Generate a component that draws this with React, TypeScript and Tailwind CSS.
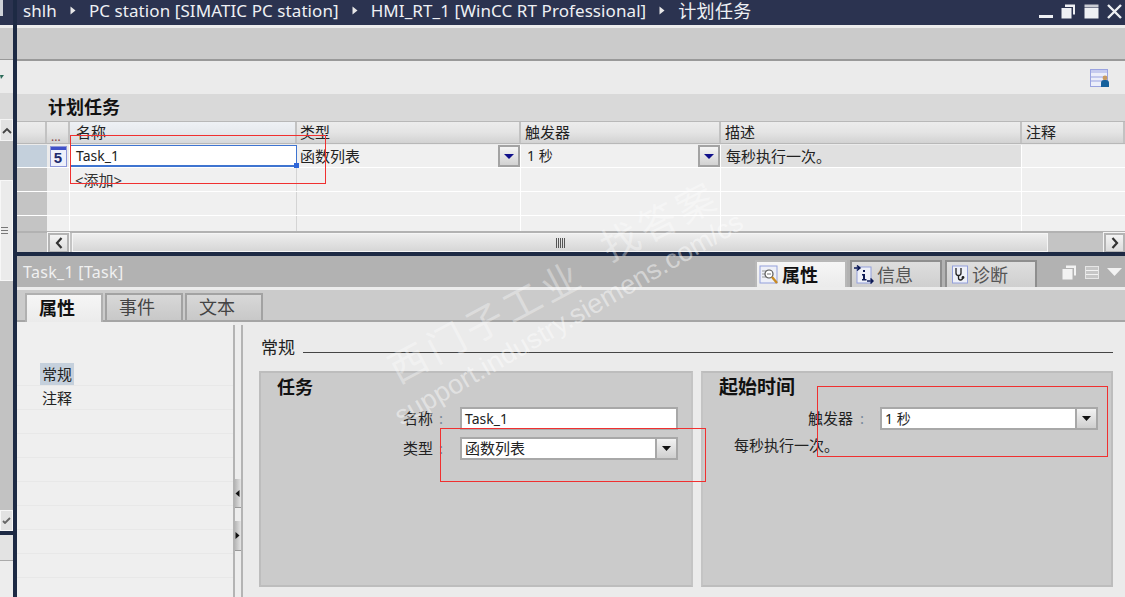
const FONT = "font-['Noto_Sans','Noto_Sans_CJK_SC',sans-serif]";
const COLS = "grid-cols-[30px_23px_227px_224px_200px_301px_1fr]";

function Caret() {
  return (
    <svg width="6" height="9" viewBox="0 0 6 9" className="shrink-0">
      <path d="M0.5 0.5 L5.5 4.5 L0.5 8.5 Z" fill="#e8e8e8" />
    </svg>
  );
}

function Crumb({ children }: { children: React.ReactNode }) {
  return <span className="whitespace-nowrap">{children}</span>;
}

function WindowButtons() {
  return (
    <div className="ml-auto flex items-center gap-[8px] pr-[3px] pt-[1px]">
      <svg width="14" height="15" viewBox="0 0 14 15"><rect x="0" y="11" width="14" height="3" fill="#eef0f4" /></svg>
      <svg width="15" height="15" viewBox="0 0 15 15"><path d="M4 0.5h10v10h-2V3H4z" fill="#eef0f4" /><rect x="0.5" y="4" width="10" height="10.5" fill="#eef0f4" /></svg>
      <svg width="15" height="15" viewBox="0 0 15 15"><rect x="0.5" y="0.5" width="14" height="3" fill="#c9ccd4" /><rect x="0.5" y="4" width="14" height="10.5" fill="#eef0f4" /></svg>
      <svg width="15" height="15" viewBox="0 0 15 15"><path d="M1 1 L14 14 M14 1 L1 14" stroke="#eef0f4" strokeWidth="2.4" /></svg>
    </div>
  );
}

function HeaderCell({ children, tint }: { children?: React.ReactNode; tint?: boolean }) {
  return (
    <div
      className={`flex h-full items-center border-r-2 border-[#c2c2c2] pl-[4px] text-[15px] leading-none text-[#222] bg-gradient-to-b ${tint ? "from-[#eef1f5] via-[#e6e9ed] to-[#d6d8da]" : "from-[#ececec] via-[#e4e4e4] to-[#d2d2d2]"}`}
    >
      {children}
    </div>
  );
}

function DropBlue() {
  return (
    <div className="flex h-[22px] w-[22px] items-center justify-center border-2 border-[#a3a3a3] bg-gradient-to-b from-[#f5f5f5] to-[#d2d2d2]">
      <svg width="10" height="5" viewBox="0 0 10 5"><path d="M0 0 H10 L5 5 Z" fill="#10108a" /></svg>
    </div>
  );
}

function DropBlack() {
  return (
    <div className="flex h-full w-[21px] items-center justify-center border-l-2 border-[#a8a8a8] bg-gradient-to-b from-[#f2f2f2] to-[#cfcfcf]">
      <svg width="9" height="5" viewBox="0 0 9 5"><path d="M0 0 H9 L4.5 5 Z" fill="#111" /></svg>
    </div>
  );
}

function FiveIcon() {
  return (
    <div className="flex h-[21px] w-[17px] flex-col border border-[#8e97d8] bg-[#eef0fb]">
      <div className="h-[3px] bg-[#3f51c8]" />
      <div className="flex flex-1 items-center justify-center font-['Liberation_Sans',sans-serif] text-[15px] font-bold leading-none text-[#1d2a6e]">5</div>
    </div>
  );
}

function TableRow() {
  return (
    <div className={`grid h-[24px] ${COLS} border-b border-white`}>
      <div className="bg-[#c4c4c4]" />
      <div className="border-r border-white bg-[#ebebeb]" />
      <div className="border-r border-[#d4d4d4] bg-[#f0f0f0]" />
      <div className="border-r border-white bg-[#f0f0f0]" />
      <div className="border-r border-white bg-[#f0f0f0]" />
      <div className="border-r border-white bg-[#f0f0f0]" />
      <div className="bg-[#f0f0f0]" />
    </div>
  );
}

function ScrollButton({ left }: { left?: boolean }) {
  return (
    <div className="flex h-[20px] w-[21px] shrink-0 items-center justify-center border-2 border-[#b4b4b4] bg-gradient-to-b from-[#f4f4f4] to-[#dcdcdc] outline outline-1 outline-[#f5f5f5]">
      <svg width="8" height="12" viewBox="0 0 8 12">
        <path d={left ? "M6.5 1 L2 6 L6.5 11" : "M1.5 1 L6 6 L1.5 11"} fill="none" stroke="#333" strokeWidth="2.2" />
      </svg>
    </div>
  );
}

function LeftStrip() {
  return (
    <div className="flex w-[13px] shrink-0 flex-col overflow-hidden bg-[#c2c2c2]">
      <div className="flex h-[25px] bg-[#2b3350]"><div className="h-[16px] w-[3px] bg-[#cfd2d8]" /></div>
      <div className="h-[3px] bg-[#ececec]" />
      <div className="h-[32px] border-b border-[#999] bg-[#cbcbcb]" />
      <div className="flex h-[33px] items-center bg-[#ebebeb]">
        <svg width="4" height="4" viewBox="0 0 4 4"><path d="M0 0 H4 L1 4 Z" fill="#2b6a58" /></svg>
      </div>
      <div className="h-[26px] bg-[#d9d9d9]" />
      <div className="flex h-[22px] items-center justify-center border border-[#f4f4f4] bg-[#e2e2e2]">
        <svg width="10" height="7" viewBox="0 0 10 7"><path d="M1 6 L5 2 L9 6" fill="none" stroke="#444" strokeWidth="1.8" /></svg>
      </div>
      <div className="h-[39px] bg-[#c2c2c2]" />
      <div className="flex h-[101px] items-center border border-[#f7f7f7] bg-[#ebebeb]">
        <div className="h-[7px] w-[7px] border-y border-[#777] bg-[linear-gradient(#ebebeb_40%,#777_40%,#777_60%,#ebebeb_60%)]" />
      </div>
      <div className="h-[229px] bg-[#c2c2c2]" />
      <div className="flex h-[21px] items-center justify-center border border-[#f7f7f7] bg-[#e2e2e2]">
        <svg width="9" height="7" viewBox="0 0 9 7"><path d="M1 4 L3 6 L8 1" fill="none" stroke="#666" strokeWidth="1.8" /></svg>
      </div>
      <div className="h-[4px] bg-[#1d2a44]" />
      <div className="h-[26px] border-b border-[#aaa] bg-[#e3e3e3]" />
      <div className="flex-1 bg-[#ededed]" />
    </div>
  );
}

function EditorTab({ active, children }: { active?: boolean; children: React.ReactNode }) {
  return (
    <div
      className={`flex w-[78px] items-center border-2 border-b-0 pb-[2px] pl-[12px] text-[18px] leading-none ${active ? "-mb-[2px] h-[29px] border-[#b0b0b0] bg-gradient-to-b from-[#f6f6f6] to-[#ebebeb] font-bold text-[#111]" : "h-[27px] border-[#a2a2a2] bg-gradient-to-b from-[#d8d8d8] to-[#c8c8c8] text-[#444]"}`}
    >
      {children}
    </div>
  );
}

function InspectorTab({ active, icon, children }: { active?: boolean; icon: React.ReactNode; children: React.ReactNode }) {
  return (
    <div
      className={`flex h-[27px] w-[92px] items-center gap-[3px] border-2 border-b-0 pl-[2px] text-[18px] leading-none ${active ? "border-[#b8b8b8] bg-gradient-to-b from-[#f6f6f6] to-[#ebebeb] font-bold text-[#111]" : "border-[#8e8e8e] bg-gradient-to-b from-[#dedede] to-[#cfcfcf] text-[#555]"}`}
    >
      {icon}
      {children}
    </div>
  );
}

function PropIcon() {
  return (
    <svg width="20" height="20" viewBox="0 0 20 20">
      <rect x="1" y="1" width="17" height="17" fill="#eef0f8" stroke="#93a0dc" />
      <path d="M3 6h4M3 9h3M3 12h4" stroke="#999" />
      <circle cx="10" cy="9" r="4" fill="#fff" stroke="#555" strokeWidth="1.2" />
      <path d="M8 9h4" stroke="#777" />
      <path d="M13 12 L18 18" stroke="#c88a20" strokeWidth="2.4" />
    </svg>
  );
}

function InfoIcon() {
  return (
    <svg width="20" height="20" viewBox="0 0 20 20">
      <rect x="3" y="2" width="14" height="16" fill="#eef0f8" stroke="#93a0dc" />
      <path d="M0 3h5M3 0.5 L6 3 L3 5.5" fill="none" stroke="#0d1a55" strokeWidth="1.5" />
      <path d="M13 16h6M16.5 13.5 L19 16 L16.5 18.5" fill="none" stroke="#0d1a55" strokeWidth="1.5" />
      <path d="M9 5h2v2H9z M8 9h3v5h1.5v1.5H8V14h1v-3.5H8z" fill="#0d1a55" />
    </svg>
  );
}

function DiagIcon() {
  return (
    <svg width="17" height="20" viewBox="0 0 17 20" className="ml-[3px]">
      <rect x="0.5" y="1" width="15" height="17" fill="#eef0f8" stroke="#93a0dc" />
      <path d="M4 3v5a2.5 2.5 0 0 0 5 0V3" fill="none" stroke="#222" strokeWidth="1.3" />
      <path d="M6.5 10.5v2.5a2 2 0 0 0 4 0" fill="none" stroke="#222" strokeWidth="1.3" />
      <circle cx="11" cy="12.5" r="1.4" fill="#222" />
    </svg>
  );
}

function GridIcon() {
  return (
    <svg width="20" height="20" viewBox="0 0 20 20">
      <rect x="0.5" y="1.5" width="17" height="17" fill="#eceefa" stroke="#9aa3e0" />
      <rect x="1" y="2" width="16" height="3" fill="#c6cbef" />
      <path d="M1 9h16M1 13h16" stroke="#9aa3e0" />
      <circle cx="15" cy="10" r="2.4" fill="#c89a60" />
      <path d="M11 19v-4a3 3 0 0 1 3-3h2a3 3 0 0 1 3 3v4z" fill="#15609c" />
    </svg>
  );
}

function Field({ label, children }: { label: string; children: React.ReactNode }) {
  return (
    <div className="flex h-[23px] items-center">
      <div className="flex w-[57px] items-center text-[15px] leading-none text-[#222]">
        <span>{label}</span>
        <span className="ml-[6px] text-[#789]">:</span>
      </div>
      {children}
    </div>
  );
}

export default function App() {
  const navRows = [0, 1, 2, 3, 4, 5, 6, 7, 8, 9];
  return (
    <div className={`relative flex h-[597px] w-[1125px] overflow-hidden bg-[#ebebeb] ${FONT}`}>
      <LeftStrip />
      <div className="w-[4px] shrink-0 bg-[#1d2a44]" />
      <div className="flex min-w-0 flex-1 flex-col">
        {/* Title bar */}
        <div className="flex h-[25px] shrink-0 items-center gap-[13px] bg-[#2b3350] pb-[4px] pl-[6px] text-[17px] leading-none tracking-[0.08px] text-[#eef0f4]">
          <Crumb>shlh</Crumb>
          <Caret />
          <Crumb>PC station [SIMATIC PC station]</Crumb>
          <Caret />
          <Crumb>HMI_RT_1 [WinCC RT Professional]</Crumb>
          <Caret />
          <Crumb><span className="text-[18px] tracking-[0.3px]">计划任务</span></Crumb>
          <WindowButtons />
        </div>
        <div className="h-[3px] shrink-0 bg-[#ececec]" />
        <div className="h-[33px] shrink-0 border-b-2 border-[#999] bg-[#cbcbcb]" />
        {/* Icon toolbar */}
        <div className="flex h-[33px] shrink-0 items-center justify-end bg-[#ebebeb] pr-[15px]">
          <GridIcon />
        </div>
        {/* Section title */}
        <div className="flex h-[27px] shrink-0 items-center bg-[#d9d9d9] pb-[2px] pl-[31px] text-[18px] font-bold leading-none text-[#111]">
          计划任务
        </div>
        {/* Table header */}
        <div className={`grid h-[23px] shrink-0 ${COLS} border-y border-[#b8b8b8] bg-[#ddd]`}>
          <HeaderCell />
          <HeaderCell><span className="pt-[8px] text-[12px] text-[#844]">...</span></HeaderCell>
          <HeaderCell tint><span className="pl-[2px]">名称</span></HeaderCell>
          <HeaderCell><span className="-ml-px">类型</span></HeaderCell>
          <HeaderCell>触发器</HeaderCell>
          <HeaderCell>描述</HeaderCell>
          <HeaderCell>注释</HeaderCell>
        </div>
        {/* Selected row */}
        <div className={`grid h-[24px] shrink-0 ${COLS} border-b border-white pt-px`}>
          <div className="bg-[#c4d0dc]" />
          <div className="flex items-center justify-center border-r border-white bg-[#ebebeb]"><FiveIcon /></div>
          <div className="relative flex items-center border-x border-b-2 border-t border-[#3f74d0] bg-white pl-[5px] text-[14px] leading-none text-[#222]">
            Task_1
            <div className="absolute -bottom-[3px] -right-[3px] h-[5px] w-[5px] bg-[#2f66d8]" />
          </div>
          <div className="flex items-center justify-between border-r border-white bg-[#f0f0f0] pl-[3px] text-[15px] leading-none text-[#222]">
            函数列表
            <DropBlue />
          </div>
          <div className="flex items-center justify-between border-r border-white bg-[#f0f0f0] pl-[6px] text-[14px] leading-none text-[#222]">
            1 秒
            <DropBlue />
          </div>
          <div className="flex items-center border-r border-white bg-[#e0e0e0] pl-[5px] text-[15px] leading-none text-[#222]">
            每秒执行一次。
          </div>
          <div className="bg-[#f0f0f0]" />
        </div>
        {/* Add row */}
        <div className={`grid h-[24px] shrink-0 ${COLS} border-b border-white`}>
          <div className="bg-[#c4c4c4]" />
          <div className="border-r border-white bg-[#ebebeb]" />
          <div className="flex items-center border-r border-[#d4d4d4] bg-[#f0f0f0] pl-[5px] pt-[2px] text-[15px] leading-none text-[#333]">&lt;添加&gt;</div>
          <div className="border-r border-white bg-[#f0f0f0]" />
          <div className="border-r border-white bg-[#f0f0f0]" />
          <div className="border-r border-white bg-[#f0f0f0]" />
          <div className="bg-[#f0f0f0]" />
        </div>
        <TableRow />
        <div className={`grid h-[15px] shrink-0 ${COLS}`}>
          <div className="bg-[#c4c4c4]" />
          <div className="border-r border-white bg-[#f0f0f0]" />
          <div className="border-r border-[#d4d4d4] bg-[#f0f0f0]" />
          <div className="border-r border-white bg-[#f0f0f0]" />
          <div className="border-r border-white bg-[#f0f0f0]" />
          <div className="border-r border-white bg-[#f0f0f0]" />
          <div className="bg-[#f0f0f0]" />
        </div>
        {/* Scrollbar */}
        <div className="flex h-[21px] shrink-0 items-center border-t-2 border-[#b2b2b2] bg-[#c4c4c4]">
          <div className="w-[31px] shrink-0" />
          <ScrollButton left />
          <div className="ml-[3px] flex h-[19px] w-[976px] items-center justify-center border border-[#f5f5f5] bg-gradient-to-b from-[#eeeeee] to-[#d6d6d6]">
            <div className="h-[10px] w-[9px] bg-[repeating-linear-gradient(90deg,#555_0,#555_1px,transparent_1px,transparent_2px)]" />
          </div>
          <div className="flex-1" />
          <ScrollButton />
        </div>
        <div className="h-[4px] shrink-0 bg-[#1d2a44]" />
        {/* Inspector header */}
        <div className="flex h-[31px] shrink-0 items-end justify-between bg-[#b2b2b2] pl-[6px] pr-[88px]">
          <div className="self-center whitespace-nowrap text-[16px] leading-none tracking-[0.3px] text-[#f0f0f0]">Task_1 [Task]</div>
          <div className="flex items-end gap-[3px]">
            <InspectorTab active icon={<PropIcon />}>属性</InspectorTab>
            <InspectorTab icon={<InfoIcon />}>信息</InspectorTab>
            <InspectorTab icon={<DiagIcon />}>诊断</InspectorTab>
          </div>
        </div>
        <div className="flex h-0 justify-end">
          <div className="relative -top-[23px] flex h-[16px] items-center gap-[8px] pr-[3px]">
            <svg width="15" height="15" viewBox="0 0 15 15"><path d="M4 0.5h10v10h-2V3H4z" fill="#f2f2f2" /><rect x="0.5" y="4" width="10" height="10.5" fill="#f2f2f2" /></svg>
            <svg width="14" height="13" viewBox="0 0 14 13"><rect x="0.5" y="0.5" width="13" height="12" fill="#c6c6c6" stroke="#e6e6e6" /><path d="M1 4.5h12M1 8.5h12" stroke="#f2f2f2" /></svg>
            <svg width="15" height="8" viewBox="0 0 15 8"><path d="M0 0 H15 L7.5 8 Z" fill="#f2f2f2" /></svg>
          </div>
        </div>
        <div className="h-[3px] shrink-0 bg-[#ececec]" />
        {/* Editor tabs */}
        <div className="flex h-[32px] shrink-0 items-end gap-[2px] border-b-2 border-[#a5a5a5] bg-[#cbcbcb] pl-[8px]">
          <EditorTab active>属性</EditorTab>
          <EditorTab>事件</EditorTab>
          <EditorTab>文本</EditorTab>
        </div>
        {/* Properties */}
        <div className="flex min-h-0 flex-1">
          <div className="w-[216px] shrink-0 bg-[#efefef] pt-[40px]">
            {navRows.map((n) => (
              <div key={n} className="flex h-[24px] items-end border-b border-[#e8e8e8] pl-[23px] text-[15px] leading-none text-[#222]">
                {n === 0 && <span className="flex h-[22px] items-center bg-[#c5d0dc] px-[2px] pt-[1px]">常规</span>}
                {n === 1 && <span className="flex h-[22px] items-center px-[2px] pt-[1px]">注释</span>}
              </div>
            ))}
          </div>
          <div className="mt-[3px] flex w-[10px] shrink-0 flex-col border-x-2 border-[#b4b4b4] bg-[#ededed]">
            <div className="h-[154px]" />
            <div className="flex h-[29px] items-center border-b border-[#999] bg-gradient-to-r from-[#b8b8b8] to-[#e4e4e4]">
              <svg width="5" height="7" viewBox="0 0 5 7"><path d="M4.5 0 V7 L0.5 3.5 Z" fill="#111" /></svg>
            </div>
            <div className="h-[13px]" />
            <div className="flex h-[30px] items-center border-b border-[#999] bg-gradient-to-r from-[#b8b8b8] to-[#e4e4e4]">
              <svg width="5" height="7" viewBox="0 0 5 7"><path d="M0.5 0 V7 L4.5 3.5 Z" fill="#111" /></svg>
            </div>
          </div>
          <div className="flex min-w-0 flex-1 flex-col pb-[10px] pl-[16px] pr-[12px] pt-[14px]">
            <div className="flex h-[22px] items-center gap-[8px] pl-[2px] text-[17px] leading-none text-[#222]">
              <span>常规</span>
              <div className="mt-[10px] h-px flex-1 bg-[#444]" />
            </div>
            <div className="mt-[13px] grid h-[216px] grid-cols-[434px_412px] gap-[8px]">
              <div className="flex flex-col border-2 border-[#bdbdbd] border-r-[#c4c4c4] bg-[#cbcbcb] pl-[16px] pt-[2px]">
                <div className="text-[18px] font-bold leading-[24px] text-[#111]">任务</div>
                <div className="ml-[126px] mt-[8px] flex flex-col gap-[7px]">
                  <Field label="名称">
                    <div className="flex h-[23px] w-[218px] items-center border-2 border-[#a8a8a8] bg-white pl-[3px] text-[14px] leading-none text-[#222]">Task_1</div>
                  </Field>
                  <Field label="类型">
                    <div className="flex h-[23px] w-[218px] items-center justify-between border-2 border-[#a8a8a8] bg-white pl-[3px] text-[15px] leading-none text-[#222]">函数列表<DropBlack /></div>
                  </Field>
                </div>
              </div>
              <div className="flex flex-col border-2 border-[#bdbdbd] border-l-[#c4c4c4] bg-[#cbcbcb] pl-[16px] pt-[2px]">
                <div className="text-[19px] font-bold leading-[24px] text-[#111]">起始时间</div>
                <div className="ml-[89px] mt-[8px]">
                  <div className="flex h-[23px] items-center">
                    <div className="flex w-[72px] items-center text-[15px] leading-none text-[#222]">
                      <span>触发器</span><span className="ml-[7px] text-[#789]">:</span>
                    </div>
                    <div className="flex h-[23px] w-[218px] items-center justify-between border-2 border-[#a8a8a8] bg-white pl-[3px] text-[14px] leading-none text-[#222]">1 秒<DropBlack /></div>
                  </div>
                </div>
                <div className="ml-[15px] mt-[5px] text-[15px] leading-[20px] text-[#222]">每秒执行一次。</div>
              </div>
            </div>
          </div>
        </div>
      </div>

      {/* Annotations */}
      <div className="pointer-events-none absolute left-[70px] top-[135px] h-[49px] w-[256px] border border-[#f03030]" />
      <div className="pointer-events-none absolute left-[440px] top-[428px] h-[54px] w-[266px] border border-[#f03030]" />
      <div className="pointer-events-none absolute left-[817px] top-[386px] h-[71px] w-[291px] border border-[#f03030]" />

      {/* Watermark */}
      <div className="pointer-events-none absolute left-[391px] top-[352px] origin-left -rotate-[28deg] whitespace-nowrap text-[38px] leading-none tracking-[5px] text-white/35">西门子工业</div>
      <div className="pointer-events-none absolute left-[603px] top-[230px] origin-left -rotate-[27deg] whitespace-nowrap text-[38px] leading-none tracking-[4px] text-white/35">找答案</div>
      <div className="pointer-events-none absolute left-[397px] top-[405px] origin-left -rotate-[30deg] whitespace-nowrap font-['Liberation_Sans',sans-serif] text-[27px] leading-none tracking-[0.2px] text-white/45">support.industry.siemens.com/cs</div>
    </div>
  );
}
